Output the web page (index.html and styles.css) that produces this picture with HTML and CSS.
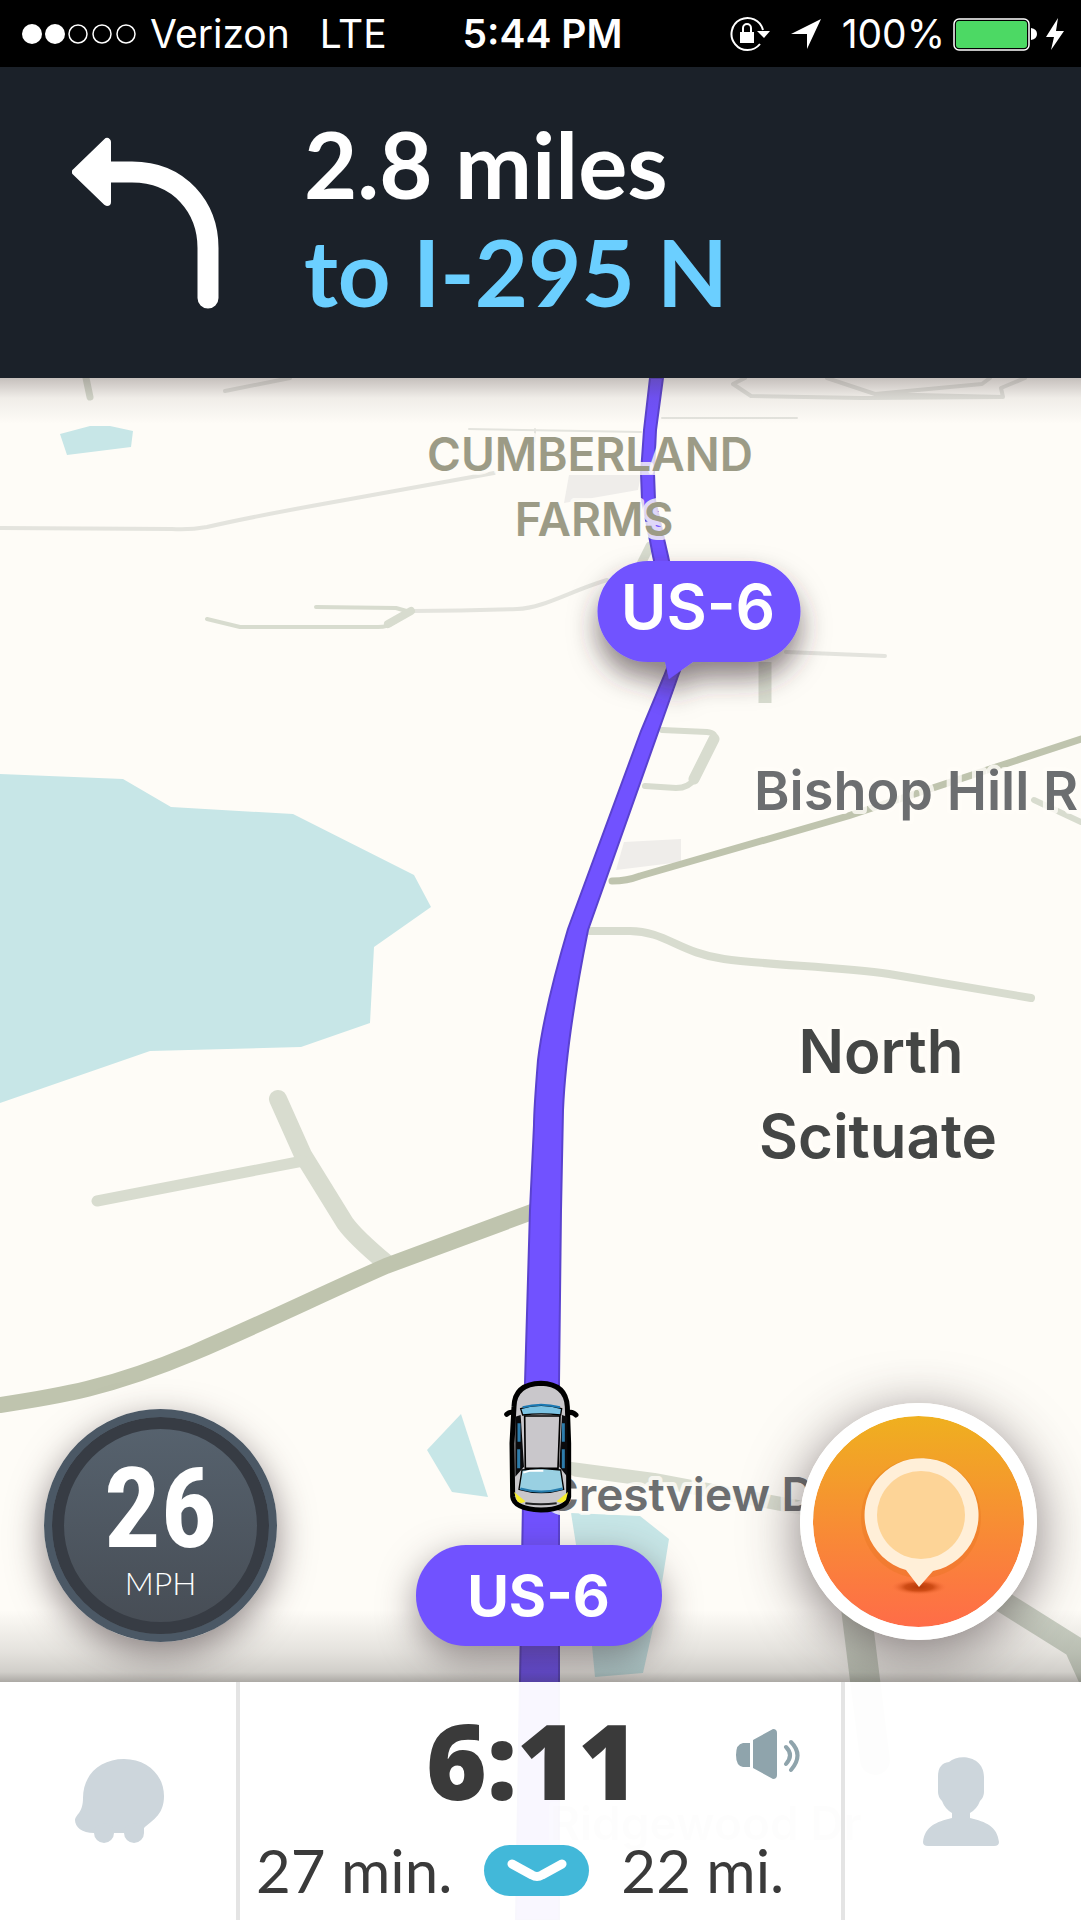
FILE: index.html
```html
<!DOCTYPE html>
<html lang="en">
<head>
<meta charset="utf-8">
<meta name="viewport" content="width=device-width, initial-scale=1">
<title>Navigation</title>
<link rel="stylesheet" href="styles.css">
</head>
<body>
<div class="app">
  <header class="status">
    <div class="status-left">
      <svg class="signal" width="116" height="22" viewBox="0 0 116 22" role="img" aria-label="Signal: 2 of 5">
        <g fill="#fff"><circle cx="12" cy="11" r="10"/><circle cx="35" cy="11" r="10"/></g>
        <g fill="none" stroke="#fff" stroke-width="1.5"><circle cx="58" cy="11" r="9"/><circle cx="82" cy="11" r="9"/><circle cx="106" cy="11" r="9"/></g>
      </svg>
      <span class="carrier">Verizon</span>
      <span>LTE</span>
    </div>
    <div class="clock">5:44 PM</div>
    <div class="status-right">
      <svg class="lock" width="40" height="36" viewBox="0 0 40 36" aria-hidden="true">
        <path d="M33 14A16 16 0 1 0 30 28" fill="none" stroke="#fff" stroke-width="2"/>
        <path d="M27 15h13l-6 7z" fill="#fff"/>
        <path d="M10 16h14v11H10z" fill="#fff"/>
        <path d="M13 16v-4a4 4 0 0 1 8 0v4" fill="none" stroke="#fff" stroke-width="2"/>
      </svg>
      <svg class="locate" width="32" height="32" viewBox="0 0 32 32" aria-hidden="true"><path d="M31 1L17 31V16H1z" fill="#fff"/></svg>
      <span class="percent">100%</span>
      <svg width="84" height="34" viewBox="0 0 84 34" aria-hidden="true">
        <rect x="1" y="2" width="75" height="31" rx="5" fill="none" stroke="#fff" stroke-width="1.5"/>
        <rect x="3" y="4" width="71" height="27" rx="3" fill="#4cd964"/>
        <path d="M78 11q6 1 6 6t-6 6z" fill="#fff"/>
      </svg>
      <svg class="bolt" width="20" height="34" viewBox="0 0 20 34" aria-hidden="true"><path d="M13 1L1 20h8L6 33 19 14h-8z" fill="#fff"/></svg>
    </div>
  </header>

  <section class="turn">
    <svg class="turn-icon" width="148" height="174" viewBox="0 0 148 174" role="img" aria-label="Turn left">
      <path d="M30 36h30C108 36 136 72 136 112v50" fill="none" stroke="#fff" stroke-width="21" stroke-linecap="round"/>
      <path d="M4 36L35 6V66z" fill="#fff" stroke="#fff" stroke-width="8" stroke-linejoin="round"/>
    </svg>
    <div class="turn-text">
      <div class="distance">2.8 miles</div>
      <div class="road">to I-295 N</div>
    </div>
  </section>

  <main class="stage">
    <svg class="map" viewBox="0 378 1081 1542" preserveAspectRatio="xMidYMid slice" role="img" aria-label="Map of North Scituate with the route along US-6">
      <defs>
        <filter id="drop" x="-30%" y="-30%" width="160%" height="190%">
          <feDropShadow dx="0" dy="16" stdDeviation="14" flood-color="#3a2c30" flood-opacity=".6"/>
        </filter>
      </defs>
      <rect y="378" width="1081" height="1542" fill="#fefcf7"/>
      <g fill="#efedea">
        <path d="M569 475H641L638 490 564 503z"/>
        <path d="M624 842L681 839V862L616 870z"/>
      </g>
      <g fill="#c7e6e7">
        <path d="M0 774L123 779 171 807 293 814 414 875 431 907 374 947 370 1023 301 1047 150 1051 0 1103z"/>
        <path d="M60 434L90 426H110L133 431 131 447 67 455z"/>
        <path d="M461 1414L427 1450 452 1492 488 1497z"/>
        <path d="M571 1513L640 1516 669 1539 659 1601 643 1673 595 1677 592 1646z"/>
      </g>
      <g class="lane thin">
        <path d="M0 528L172 529Q190 530 207 527C250 517 300 508 345 500L494 473"/>
        <path d="M469 429L641 432M662 418H797M535 429v12" stroke-width="2"/>
        <path d="M225 391L290 378"/>
        <path d="M745 378L733 384 751 396 862 398 1003 397 1001 388 1025 378M827 378L875 394 982 384 990 378M875 394L1003 397"/>
        <path d="M412 611C460 611 490 610 517 609S570 591 607 580"/>
        <path d="M786 652L885 656"/>
      </g>
      <g class="lane">
        <path d="M86 378L90 397" stroke-width="7"/>
        <path d="M207 619L240 627 378 627Q388 627 393 623L410 612 396 608 316 607" stroke-width="4"/>
        <path d="M388 624L411 611" stroke-width="8"/>
        <path d="M641 564L650 546" stroke-width="9"/>
        <path d="M765 662V703" stroke-width="13" stroke-linecap="butt"/>
        <path d="M645 786L676 788Q689 788 694 779L714 740Q717 733 707 732L662 730" stroke-width="6"/>
        <path d="M694 779L714 739" stroke-width="11"/>
        <path d="M1034 800L1081 822" stroke-width="6"/>
        <path d="M589 931H630C665 931 680 953 724 959S840 967 889 974L1031 998" stroke-width="8"/>
        <path d="M278 1099L303 1155 345 1223Q355 1237 386 1263" stroke-width="18"/>
        <path d="M97 1201L303 1161" stroke-width="11"/>
        <path d="M571 1469L654 1480 840 1515" stroke-width="14"/>
        <path d="M855 1600L875 1760" stroke-width="30" stroke="#cdd3c6"/>
        <path d="M1000 1600L1075 1647 1090 1680" stroke-width="22" stroke="#cdd3c6"/>
      </g>
      <g class="street">
        <path d="M0 1405C60 1396 110 1388 193 1353C270 1320 320 1295 386 1266L540 1209" stroke-width="16"/>
        <path d="M612 881Q627 881 640 876L848 816 1081 739" stroke-width="7"/>
      </g>
      <path d="M650 378L644 430 641 473 642 500 653 556 674 650 664 676 641 731 568 929Q544 1010 538 1060 534 1110 534 1125L530 1210 525 1383 516 1920H559V1383L561 1210 563 1110Q566 1040 588 930L678 676 688 650 668 556 655 500 654 473 656 430 663 378z" fill="#7152ff" stroke="#5a42cf" stroke-width="2"/>

      <g class="label place">
        <text x="590" y="471">CUMBERLAND</text>
        <text x="594" y="536">FARMS</text>
      </g>
      <text class="label road-name" x="754" y="810">Bishop Hill R</text>
      <g class="label town">
        <text x="881" y="1073">North</text>
        <text x="878" y="1158">Scituate</text>
      </g>
      <text class="label crest" x="545" y="1511">Crestview D</text>
      <text class="label crest faint" x="550" y="1840">Ridgewood Dr</text>

      <g filter="url(#drop)">
        <path d="M648 561H750A50 50 0 0 1 750 662H693L669 679 665 662H648A50 50 0 0 1 648 561z" fill="#7152ff"/>
      </g>
      <text class="bubble" x="698" y="629">US-6</text>

      <g transform="translate(480 1360) scale(.3333)">
        <path d="M80 163Q92 152 108 160M288 165Q276 152 262 160" fill="none" stroke="#000" stroke-width="15" stroke-linecap="round"/>
        <path d="M102 140Q104 72 183 70Q258 72 262 140L266 250 266 410Q262 448 183 450Q102 446 98 410L96 250z" fill="#c9c7cb" stroke="#000" stroke-width="15"/>
        <path d="M106 170L122 165 132 320 106 350zM262 170L246 165 238 320 262 350z" fill="#0a0a0c"/>
        <path d="M117 190V245M116 268V325M250 190V245M250 268V325" stroke="#2d7cab" stroke-width="9" fill="none"/>
        <path d="M122 146Q183 126 245 146L242 165Q183 158 128 165z" fill="#7cc3e3" stroke="#000" stroke-width="4"/>
        <path d="M128 142Q183 126 240 142" stroke="#1b79b3" stroke-width="6" fill="none"/>
        <path d="M134 168H240L234 325H136z" fill="#c9c7cb" stroke="#000" stroke-width="5"/>
        <path d="M126 330L183 325 242 330 251 388Q183 408 117 388z" fill="#99d0e2" stroke="#000" stroke-width="4"/>
        <path d="M121 386Q183 404 248 386" fill="none" stroke="#277dae" stroke-width="7"/>
        <path d="M130 338L150 332H190" fill="none" stroke="#fff" stroke-width="6"/>
        <path d="M136 430Q183 436 230 430" fill="none" stroke="#222" stroke-width="6"/>
        <path d="M102 396L136 424Q124 434 112 424zM264 396L230 424Q246 434 258 420z" fill="#f6ec2c"/>
      </g>
    </svg>

    <div class="view">
      <div class="speed"><strong>26</strong><span>MPH</span></div>
      <div class="current">US-6</div>
      <button class="report" type="button" aria-label="Report">
        <svg width="130" height="150" viewBox="0 0 130 150" aria-hidden="true">
          <defs><radialGradient id="spot"><stop offset="0" stop-color="#b83a08"/><stop offset=".5" stop-color="#cf4d16"/><stop offset="1" stop-color="#fb7440" stop-opacity="0"/></radialGradient></defs>
          <ellipse cx="65" cy="140" rx="28" ry="8" fill="url(#spot)"/>
          <circle cx="67" cy="71" r="60" fill="#e2701c" opacity=".3"/>
          <path d="M52 123A57 57 0 1 1 79 124L65 140z" fill="#ffefd8"/>
          <circle cx="67" cy="68" r="44" fill="#fdd497"/>
        </svg>
      </button>
    </div>

    <footer class="bar">
      <button class="tab" type="button" aria-label="Menu">
        <svg width="92" height="86" viewBox="0 0 92 86" fill="#cdd6dc" aria-hidden="true">
          <path d="M9 40C9 16 27 1 50 1S90 17 90 38C90 56 80 61 70 70V75H20C8 75 1 69 1 62C2 56 9 55 9 40z"/>
          <circle cx="30" cy="75" r="10"/><circle cx="60" cy="75" r="10"/>
        </svg>
      </button>
      <div class="trip">
        <div class="arrival">
          <strong>6:11</strong>
          <button class="sound" type="button" aria-label="Sound">
            <svg width="66" height="52" viewBox="0 0 66 52" aria-hidden="true">
              <path d="M8 15h7v24H8Q1 38 1 27T8 15zM18 12L38 1Q42 1 42 5V47Q42 51 38 51L18 40z" fill="#8fa4ac"/>
              <path d="M51 19q8 8 0 17M56 14q13 13 0 28" fill="none" stroke="#8fa4ac" stroke-width="4" stroke-linecap="round"/>
            </svg>
          </button>
        </div>
        <div class="details">
          <span>27 min.</span>
          <button class="expand" type="button" aria-label="Show route details">
            <svg width="62" height="24" viewBox="0 0 62 24" aria-hidden="true"><path d="M6 6L26 17Q31 20 36 17L56 6" fill="none" stroke="#fff" stroke-width="9" stroke-linecap="round" stroke-linejoin="round"/></svg>
          </button>
          <span>22 mi.</span>
        </div>
      </div>
      <button class="tab" type="button" aria-label="Profile">
        <svg width="78" height="92" viewBox="0 0 78 92" fill="#cdd6dc" aria-hidden="true">
          <path d="M16 22C16 12 20 8 27 7C37-2 62 1 62 22V37Q62 42 58 46Q55 54 48 58V63C64 67 75 71 77 87Q77 91 72 91H6Q1 91 1 87C3 71 14 67 30 63V58Q23 54 20 46Q16 42 16 37z"/>
        </svg>
      </button>
    </footer>
  </main>
</div>
</body>
</html>
```

FILE: styles.css
```css
* { box-sizing: border-box; }

body {
  margin: 0;
  font-family: Inter, "Liberation Sans", sans-serif;
}

button {
  padding: 0;
  border: 0;
  background: none;
  font: inherit;
  display: flex;
  align-items: center;
  justify-content: center;
}

svg { display: block; flex: none; }

.app {
  min-height: 100vh;
  display: flex;
  flex-direction: column;
}

/* Phone status bar */
.status {
  display: grid;
  grid-template-columns: 1fr auto 1fr;
  align-items: center;
  padding: 1px 16px 0 20px;
  background: #000;
  color: #fff;
  font-size: 39px;
  line-height: 66px;
}

.status-left,
.status-right { display: flex; align-items: center; }
.status-right { justify-content: flex-end; }
.carrier { margin: 0 30px 0 14px; }
.clock { font-weight: 600; }
.locate { margin: 0 20px; }
.percent { margin-right: 8px; }
.bolt { margin-left: 8px; }

/* Next turn */
.turn {
  display: flex;
  align-items: center;
  gap: 84px;
  height: 311px;
  padding: 0 72px;
  background: #1b2129;
  color: #fff;
  font-family: Lato, Inter, sans-serif;
  font-size: 92px;
  font-weight: 700;
  line-height: 108px;
}

.turn-text { padding-bottom: 10px; }
.road { color: #6bcfff; }

/* Map and everything over it */
.stage {
  position: relative;
  flex: 1;
  display: flex;
  flex-direction: column;
  overflow: hidden;
}

.map {
  position: absolute;
  inset: 0;
  width: 100%;
  height: 100%;
}

.lane, .street { fill: none; stroke-linecap: round; stroke-linejoin: round; }
.lane { stroke: #d8dccf; }
.thin { stroke: #e4e4de; stroke-width: 4px; }
.street { stroke: #bfc4ae; }

.label {
  font-weight: 600;
  paint-order: stroke;
  stroke: #fffdf8;
  stroke-opacity: .8;
  stroke-width: 8px;
  stroke-linejoin: round;
}
.place { fill: #9c9b86; font-size: 46px; text-anchor: middle; }
.road-name { fill: #6c6e70; font-size: 54px; }
.town { fill: #444645; font-size: 60px; text-anchor: middle; }
.crest { fill: #6c6e70; font-size: 46px; }
.faint { opacity: .3; }
.bubble { fill: #fff; font-size: 62px; font-weight: 600; text-anchor: middle; }

.view {
  position: relative;
  flex: 1;
  display: flex;
  align-items: flex-end;
  justify-content: space-between;
  padding: 0 44px 40px;
  background:
    linear-gradient(#4a3c3c50, #4a3c3c14 20px, #4a3c3c00 46px),
    linear-gradient(0deg, #302c2866, #302c2838 10px, #302c2820 30px, #302c2800 72px);
}

.speed {
  width: 233px;
  height: 233px;
  display: flex;
  flex-direction: column;
  align-items: center;
  padding-top: 40px;
  border: 8px solid #4b5865;
  border-radius: 50%;
  background: linear-gradient(#57636f, #464c54);
  box-shadow: inset 0 0 0 12px #373c44, 0 12px 36px #3a2c3090;
  color: #fff;
}
.speed strong {
  font-family: "Roboto Condensed", "Liberation Sans Narrow", Roboto, sans-serif;
  font-size: 112px;
  line-height: 104px;
}
.speed span {
  font-family: Lato, sans-serif;
  font-size: 32px;
  font-weight: 300;
  line-height: 44px;
}

.current {
  width: 246px;
  margin-bottom: -4px;
  border-radius: 50px;
  background: #7152ff;
  box-shadow: 0 12px 36px #3a2c3080;
  color: #fff;
  font-size: 57px;
  font-weight: 700;
  line-height: 101px;
  text-align: center;
}

.report {
  width: 237px;
  height: 237px;
  margin-bottom: 2px;
  border: 13px solid #fff;
  border-radius: 50%;
  background: linear-gradient(#efb01f, #ff6c48) padding-box;
  box-shadow: 0 12px 56px #3a2c30a0;
}

/* Trip summary */
.bar {
  position: relative;
  display: grid;
  grid-template-columns: 240px 1fr 240px;
  height: 238px;
  background: #fffffff4;
  color: #3a3a3a;
}

.trip {
  border: solid #e4e4e4;
  border-width: 0 4px;
  margin: 0 -4px;
  padding: 24px 32px 0 16px;
}

.arrival {
  display: grid;
  grid-template-columns: 1fr auto 1fr;
  align-items: center;
  font-family: "Open Sans", sans-serif;
  font-size: 104px;
  line-height: 108px;
}
.arrival strong { grid-column: 2; font-weight: 800; }
.sound { justify-self: end; margin: 0 8px 12px 0; }

.details {
  display: flex;
  align-items: center;
  gap: 32px;
  padding-top: 16px;
  font-family: Lato, Inter, sans-serif;
  font-size: 60px;
  line-height: 80px;
}

.expand {
  width: 105px;
  height: 51px;
  border-radius: 26px;
  background: #42b8d9;
}
```
